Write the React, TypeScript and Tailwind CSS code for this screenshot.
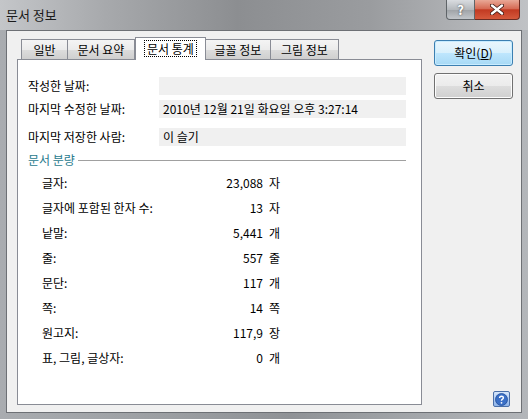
const FONT = "font-['Noto_Sans_CJK_KR','Noto_Sans',sans-serif]";

const TABS = [
  { label: '일반', w: 'w-[47px]' },
  { label: '문서 요약', w: 'w-[68px]' },
  { label: '문서 통계', w: 'w-[71px]', active: true },
  { label: '글꼴 정보', w: 'w-[66px]' },
  { label: '그림 정보', w: 'w-[69px]' },
];

const INFO = [
  { label: '작성한 날짜:', value: '', mt: 'mt-[17px]' },
  { label: '마지막 수정한 날짜:', value: '2010년 12월 21일 화요일 오후 3:27:14', mt: 'mt-[5px]' },
  { label: '마지막 저장한 사람:', value: '이 슬기', mt: 'mt-[10px]' },
];

const STATS = [
  { label: '글자:', value: '23,088', unit: '자' },
  { label: '글자에 포함된 한자 수:', value: '13', unit: '자' },
  { label: '낱말:', value: '5,441', unit: '개' },
  { label: '줄:', value: '557', unit: '줄' },
  { label: '문단:', value: '117', unit: '개' },
  { label: '쪽:', value: '14', unit: '쪽' },
  { label: '원고지:', value: '117,9', unit: '장' },
  { label: '표, 그림, 글상자:', value: '0', unit: '개' },
];

export default function App() {
  return (
    <div
      className={`${FONT} flex h-[419px] w-[528px] flex-col overflow-hidden bg-[linear-gradient(90deg,#a9acb0_0%,#9c9fa3_30%,#8f9296_55%,#a4a7ab_80%,#b3b6ba_100%)] text-[12px] text-black`}
    >
      {/* ── Title bar ───────────────────────────── */}
      <div className="flex h-[30px] shrink-0 items-start justify-between bg-[linear-gradient(90deg,#c4c6c9_0%,#a7a9ac_20%,#8c8e91_45%,#9a9c9f_70%,#c0c2c5_100%)]">
        <span className="ml-[6px] mt-[6px] text-[13px] leading-[18px] text-[#1a1a1a]">문서 정보</span>
        <div className="mr-[8px] flex">
          <div className="flex h-[20px] w-[29px] items-center justify-center rounded-bl-[4px] border border-t-0 border-[#5f6468] bg-[linear-gradient(180deg,#d9dce0_0%,#b5b9bd_50%,#9ea2a6_51%,#c2c6ca_100%)] text-[13px] font-bold leading-none text-white [text-shadow:0_0_2px_#333]">
            ?
          </div>
          <div className="flex h-[20px] w-[45px] items-center justify-center rounded-br-[4px] border border-l-0 border-t-0 border-[#6b2b22] bg-[linear-gradient(180deg,#e9a896_0%,#d66b55_45%,#c23a22_52%,#d5593c_100%)]">
            <svg width="14" height="11" viewBox="0 0 14 11" aria-hidden="true">
              <path d="M2 1.5 L12 9.5 M12 1.5 L2 9.5" stroke="#3a1510" strokeWidth="4" strokeLinecap="round" />
              <path d="M2 1.5 L12 9.5 M12 1.5 L2 9.5" stroke="#ffffff" strokeWidth="2.4" strokeLinecap="round" />
            </svg>
          </div>
        </div>
      </div>

      {/* ── Client area ─────────────────────────── */}
      <div className="mx-[6px] mb-[6px] flex flex-1 border border-[#6d7075] bg-[#f0f0f0] pl-[10px] pr-[8px] pt-[5px]">
        {/* left: tabs + panel */}
        <div className="flex w-[405px] flex-col">
          <div className="flex h-[23px] items-end pl-[4px]">
            {TABS.map((t) =>
              t.active ? (
                <div
                  key={t.label}
                  className={`${t.w} relative z-10 -mb-px flex h-[23px] items-start justify-center border border-b-0 border-[#898c95] bg-white pt-[2px]`}
                >
                  <span className="border border-dotted border-black px-[2px] text-[12px] leading-[15px]">{t.label}</span>
                </div>
              ) : (
                <div
                  key={t.label}
                  className={`${t.w} flex h-[20px] items-center justify-center border border-b-0 border-[#898c95] bg-[linear-gradient(180deg,#f4f4f4_0%,#ebebeb_50%,#dddddd_51%,#cfcfcf_100%)] text-[12px] leading-none -ml-px first:ml-0`}
                >
                  {t.label}
                </div>
              ),
            )}
          </div>

          <div className="flex h-[346px] flex-col border border-[#898c95] bg-white">
            {INFO.map((r) => (
              <div key={r.label} className={`${r.mt} flex h-[18px] items-center`}>
                <span className="w-[141px] pl-[10px] leading-none">{r.label}</span>
                <div className="flex h-[18px] w-[247px] items-center bg-[#f0f0f0] pl-[4px] leading-none">{r.value}</div>
              </div>
            ))}

            <div className="mt-[5px] flex items-center pl-[10px]">
              <span className="text-[12px] leading-[18px] text-[#2a7b8e]">문서 분량</span>
              <div className="ml-[3px] h-px w-[328px] bg-[#a0a0a0]" />
            </div>

            <div className="mt-[1px] flex flex-col pl-[24px]">
              {STATS.map((s) => (
                <div key={s.label} className="flex h-[25px] items-center leading-none">
                  <span className="w-[171px]">{s.label}</span>
                  <span className="w-[50px] text-right">{s.value}</span>
                  <span className="ml-[6px]">{s.unit}</span>
                </div>
              ))}
            </div>
          </div>
        </div>

        {/* right: buttons */}
        <div className="ml-[12px] flex flex-1 flex-col items-end pb-[5px] pt-[4px]">
          <button
            type="button"
            className="flex h-[26px] w-[79px] items-center justify-center rounded-[3px] border border-[#3c7fb1] bg-[linear-gradient(180deg,#eaf6fd_0%,#d9f0fc_50%,#bee6fd_51%,#a7d9f5_100%)] leading-none shadow-[inset_0_0_0_1px_#c8ecff]"
          >
            확인(<span className="underline">D</span>)
          </button>
          <button
            type="button"
            className="mt-[7px] flex h-[26px] w-[79px] items-center justify-center rounded-[3px] border border-[#707070] bg-[linear-gradient(180deg,#f2f2f2_0%,#ebebeb_50%,#dddddd_51%,#cfcfcf_100%)] leading-none shadow-[inset_0_0_0_1px_#fcfcfc]"
          >
            취소
          </button>
          <div className="flex-1" />
          <div className="mr-[3px] flex h-[16px] w-[17px] items-center justify-center rounded-[2px] border border-[#4a6fa8] bg-[linear-gradient(180deg,#d6e6fb_0%,#8fb4ea_100%)]">
            <svg width="13" height="13" viewBox="0 0 13 13" aria-hidden="true">
              <circle cx="6.5" cy="6.5" r="6" fill="#3a6fc6" stroke="#1f4d9a" strokeWidth="0.8" />
              <path d="M4.6 5 Q4.6 3.2 6.5 3.2 Q8.4 3.2 8.4 4.8 Q8.4 5.8 7.2 6.4 Q6.5 6.8 6.5 7.8" fill="none" stroke="#fff" strokeWidth="1.4" />
              <circle cx="6.5" cy="9.8" r="0.9" fill="#fff" />
            </svg>
          </div>
        </div>
      </div>
    </div>
  );
}
